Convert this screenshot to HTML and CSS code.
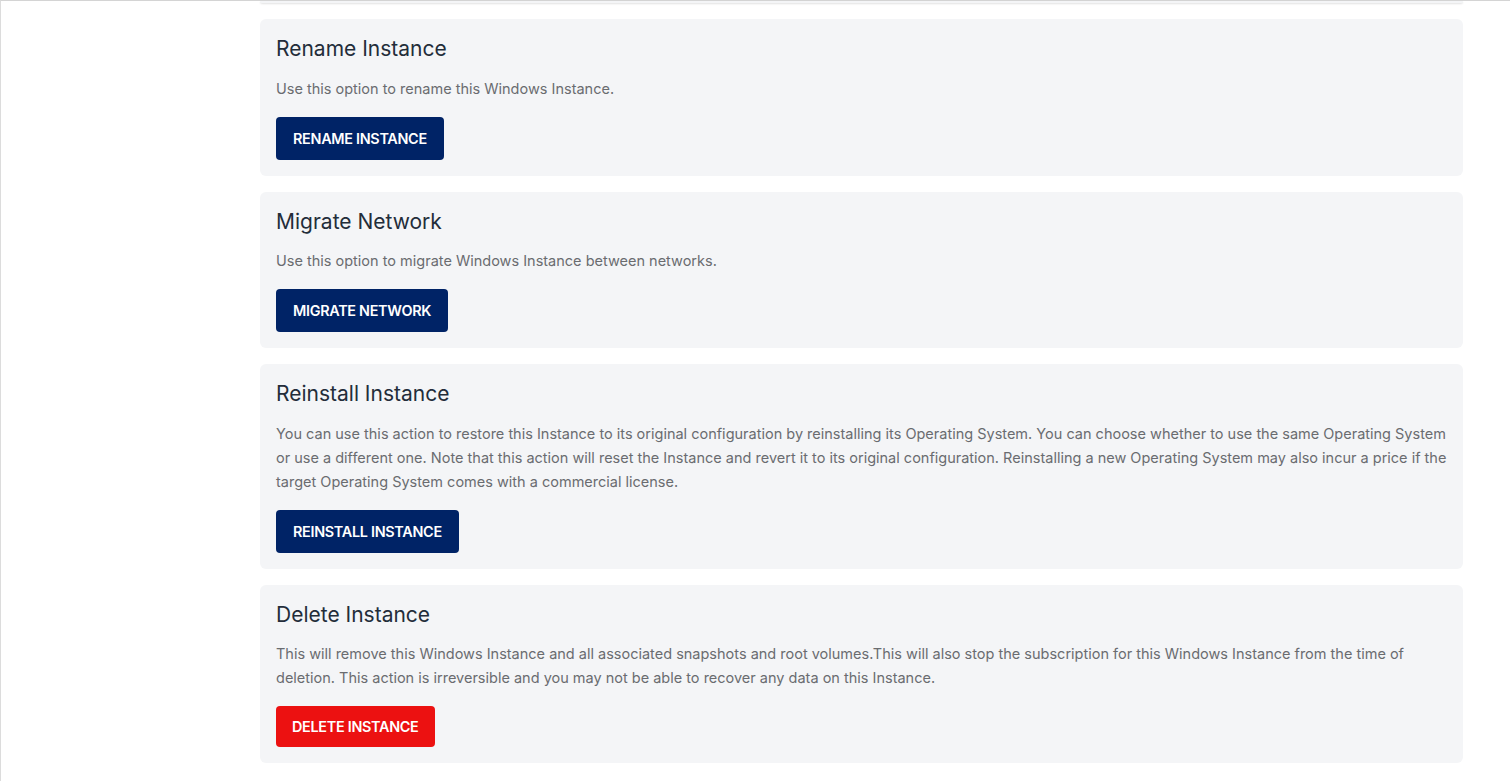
FILE: index.html
```html
<!DOCTYPE html>
<html>
<head>
<meta charset="utf-8">
<link rel="stylesheet" href="styles.css">
</head>
<body>
<div class="page">
  <div class="main">
    <div class="prev-edge"></div>
    <section class="card">
      <h2 class="card-title">Rename Instance</h2>
      <p class="card-text">Use this option to rename this Windows Instance.</p>
      <button class="btn btn-primary">RENAME INSTANCE</button>
    </section>
    <section class="card">
      <h2 class="card-title">Migrate Network</h2>
      <p class="card-text">Use this option to migrate Windows Instance between networks.</p>
      <button class="btn btn-primary">MIGRATE NETWORK</button>
    </section>
    <section class="card">
      <h2 class="card-title">Reinstall Instance</h2>
      <p class="card-text">You can use this action to restore this Instance to its original configuration by reinstalling its Operating System. You can choose whether to use the same Operating System or use a different one. Note that this action will reset the Instance and revert it to its original configuration. Reinstalling a new Operating System may also incur a price if the target Operating System comes with a commercial license.</p>
      <button class="btn btn-primary">REINSTALL INSTANCE</button>
    </section>
    <section class="card">
      <h2 class="card-title">Delete Instance</h2>
      <p class="card-text">This will remove this Windows Instance and all associated snapshots and root volumes.This will also stop the subscription for this Windows Instance from the time of deletion. This action is irreversible and you may not be able to recover any data on this Instance.</p>
      <button class="btn btn-danger">DELETE INSTANCE</button>
    </section>
  </div>
</div>
</body>
</html>
```

FILE: styles.css
```css
html, body {
  margin: 0;
  padding: 0;
  background: #ffffff;
}
body {
  font-family: "Inter", "Open Sans", "Liberation Sans", sans-serif;
  color: #212b36;
}
.page {
  min-height: 781px;
  box-sizing: border-box;
  border-top: 1px solid #d4d4d4;
  border-left: 1px solid #dcdcdc;
  padding-left: 259px;
  padding-right: 47px;
}
.main {
  display: flex;
  flex-direction: column;
  gap: 16px;
}
.prev-edge {
  height: 2px;
  border-radius: 0 0 6px 6px;
  background: #f4f5f7;
  box-shadow: 0 1px 2px rgba(0, 0, 0, 0.12);
}
.card {
  background: #f4f5f7;
  border-radius: 6px;
  padding: 16px;
}
.card-title {
  margin: 0;
  font-size: 21px;
  line-height: 28px;
  font-weight: 400;
  color: #232d3a;
}
.card-text {
  margin: 13.5px 0 16px;
  font-size: 14.5px;
  line-height: 24px;
  color: #6a6c70;
}
.btn {
  display: block;
  height: 43px;
  padding: 0 17px;
  border: none;
  border-radius: 4px;
  font-family: inherit;
  font-size: 14.4px;
  font-weight: 600;
  letter-spacing: -0.3px;
  color: #ffffff;
  cursor: pointer;
}
.btn-primary {
  background: #002366;
}
.btn-danger {
  height: 41px;
  padding: 0 16px;
  background: #ec1111;
}
```
